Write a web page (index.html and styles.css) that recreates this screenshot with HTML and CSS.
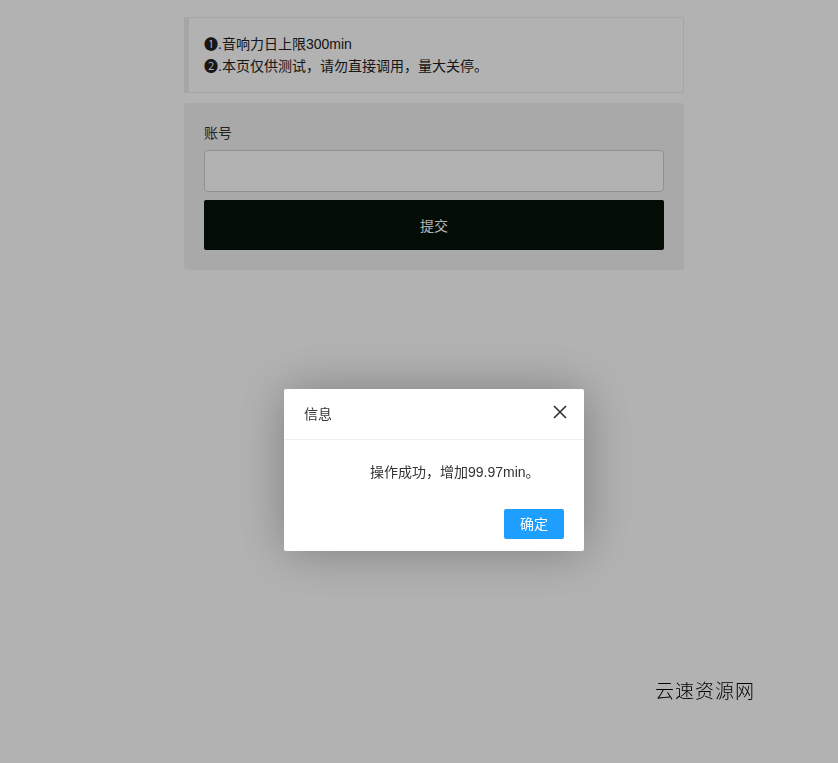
FILE: index.html
```html
<!DOCTYPE html>
<html lang="zh">
<head>
<meta charset="utf-8">
<title>测试</title>
<link rel="stylesheet" href="styles.css">
</head>
<body>
<div class="wrap">
  <blockquote class="quote">
    <div>❶.音响力日上限300min</div>
    <div>❷.本页仅供测试，请勿直接调用，量大关停。</div>
  </blockquote>
  <div class="card">
    <label class="label">账号</label>
    <input class="input" type="text">
    <button class="submit">提交</button>
  </div>
</div>
<div class="shade"></div>
<div class="layer">
  <div class="layer-title">信息
    <span class="close"><svg width="14" height="14" viewBox="0 0 14 14"><path d="M1 1L13 13M13 1L1 13" stroke="#2f2f37" stroke-width="1.6" fill="none"/></svg></span>
  </div>
  <div class="layer-content">操作成功，增加99.97min。</div>
  <div class="layer-btn"><a class="btn0">确定</a></div>
</div>
<div class="mark">云速资源网</div>
</body>
</html>
```
FILE: styles.css
```css
html, body {
  margin: 0;
  padding: 0;
  background: #fff;
  font-family: "Helvetica Neue", Arial, "Liberation Sans", "Noto Sans CJK SC", sans-serif;
  font-size: 14px;
  color: #333;
}
.wrap {
  width: 500px;
  margin: 17px 0 0 184px;
}
.quote {
  margin: 0 0 10px;
  padding: 15px;
  line-height: 22px;
  border: 1px solid #eee;
  border-left: 5px solid #eee;
  color: #222;
}
.card {
  background: #f2f2f2;
  border-radius: 4px;
  padding: 20px;
  display: flex;
  flex-direction: column;
}
.label {
  line-height: 20px;
  color: #333;
  margin-bottom: 7px;
}
.input {
  height: 42px;
  box-sizing: border-box;
  border: 1px solid #cfcfcf;
  border-radius: 4px;
  background: #fff;
  margin: 0 0 8px;
  font-size: 14px;
}
.submit {
  height: 50px;
  border: none;
  border-radius: 2px;
  background: #071209;
  color: #fff;
  font-size: 14px;
  font-family: inherit;
}
.shade {
  position: fixed;
  inset: 0;
  background: rgba(0,0,0,0.3);
}
.layer {
  position: fixed;
  left: 284px;
  top: 389px;
  width: 300px;
  background: #fff;
  border-radius: 2px;
  box-shadow: 1px 1px 50px rgba(0,0,0,0.3);
}
.layer-title {
  position: relative;
  height: 50px;
  line-height: 50px;
  padding: 0 20px;
  border-bottom: 1px solid #f0f0f0;
  color: #333;
  font-size: 14px;
}
.close {
  position: absolute;
  right: 17px;
  top: 16px;
  width: 14px;
  height: 14px;
  line-height: 0;
}
.layer-content {
  padding: 20px 20px 20px 86px;
  line-height: 24px;
  color: #333;
  font-size: 14px;
}
.layer-btn {
  display: flex;
  justify-content: flex-end;
  padding: 0 15px 12px;
}
.btn0 {
  display: block;
  height: 30px;
  line-height: 30px;
  padding: 0 16px;
  margin: 5px 5px 0;
  background: #1e9fff;
  color: #fff;
  border-radius: 2px;
  font-size: 14px;
}
.mark {
  position: fixed;
  left: 655px;
  top: 676px;
  font-size: 19px;
  letter-spacing: 1px;
  color: #000;
  font-weight: 300;
  font-family: "Liberation Serif", "Noto Sans CJK SC", serif;
}
```
